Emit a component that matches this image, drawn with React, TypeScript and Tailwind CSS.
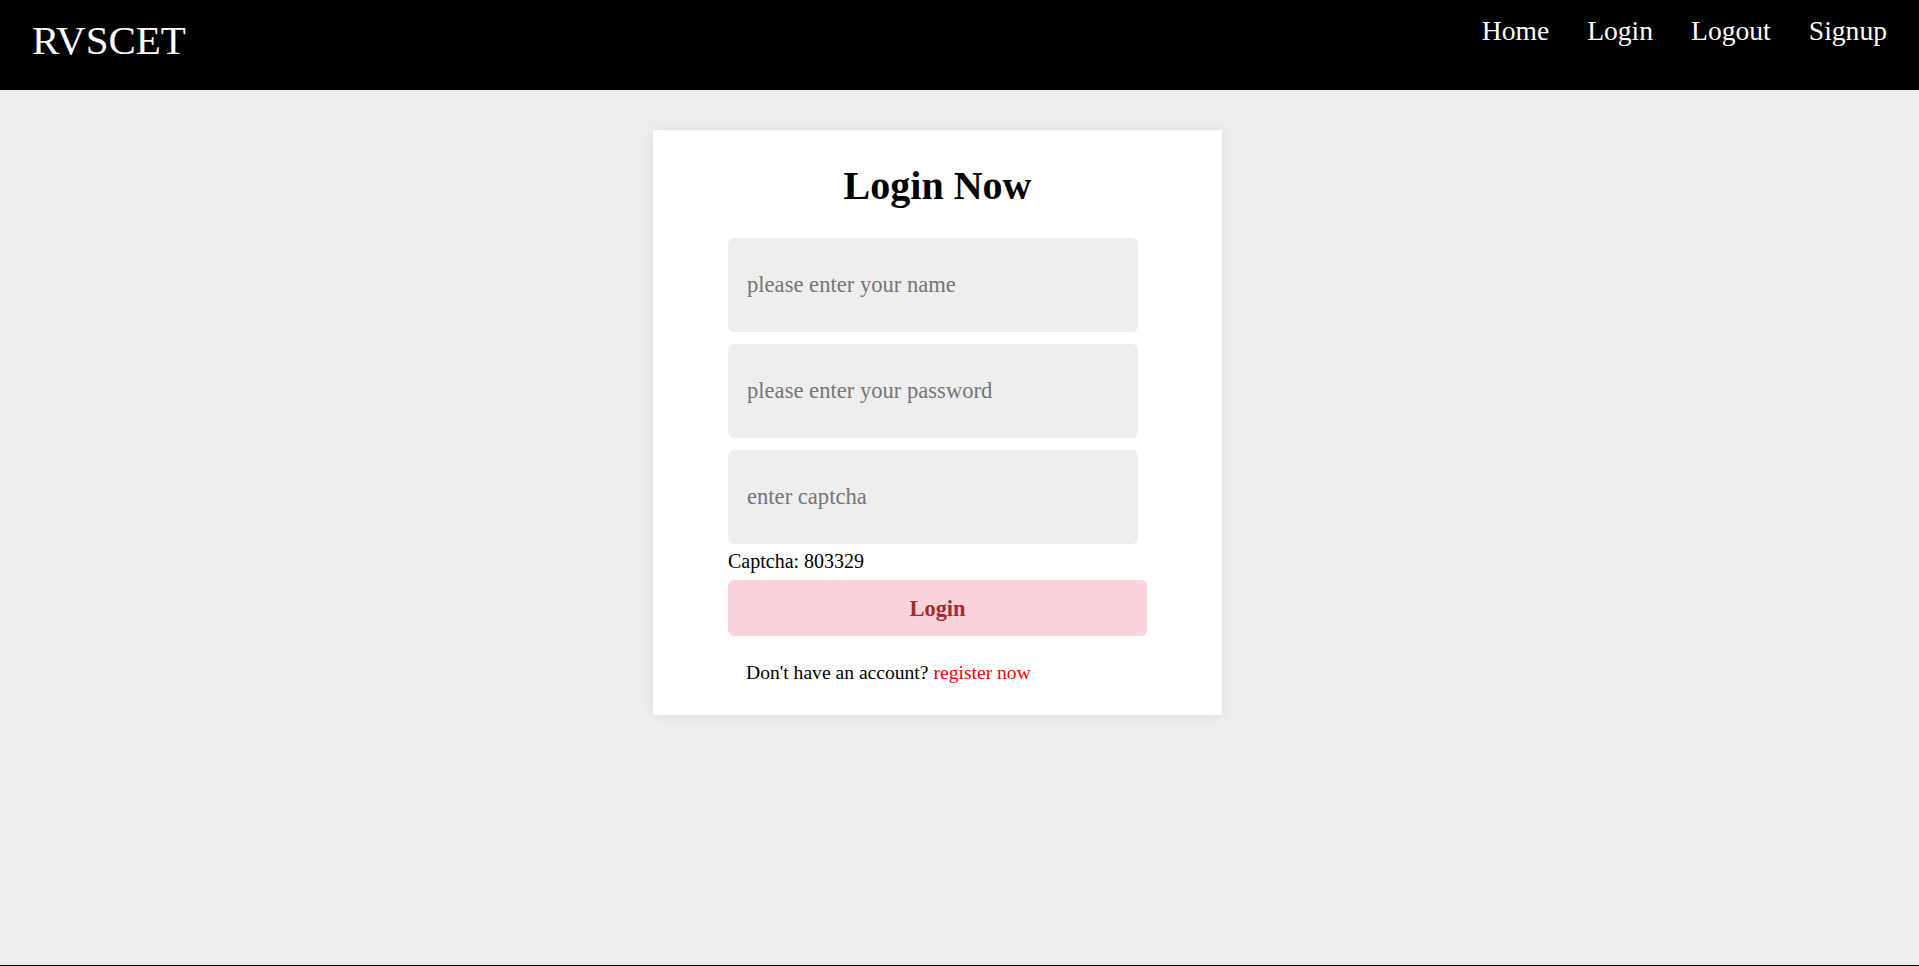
import React from "react";

export default function App() {
  return (
    <div className="min-h-screen flex flex-col bg-[#eeeeee] border-b border-black font-['Liberation_Serif',serif]">
      <header className="h-[90px] bg-black flex justify-between items-start px-[32px]">
        <div className="pt-[20px] text-[41px] leading-none text-white">RVSCET</div>
        <nav className="pt-[17px] flex gap-[38px] text-[27.6px] leading-none text-white">
          <a href="#">Home</a>
          <a href="#">Login</a>
          <a href="#">Logout</a>
          <a href="#">Signup</a>
        </nav>
      </header>
      <main className="flex-1 flex justify-center items-start pt-[40px] pr-[44px]">
        <div className="w-[569px] bg-white shadow-[0_0_12px_rgba(0,0,0,0.08)] pt-[36px] pb-[32px] px-[75px] flex flex-col">
          <h1 className="text-[40px] leading-none font-bold text-black text-center">Login Now</h1>
          <form className="mt-[32px] flex flex-col" onSubmit={(e) => e.preventDefault()}>
            <input
              type="text"
              placeholder="please enter your name"
              className="w-[410px] h-[94px] rounded-[6px] bg-[#eeeeee] px-[19px] text-[22.6px] text-black outline-none placeholder:text-[#757575]"
            />
            <input
              type="password"
              placeholder="please enter your password"
              className="mt-[12px] w-[410px] h-[94px] rounded-[6px] bg-[#eeeeee] px-[19px] text-[22.6px] text-black outline-none placeholder:text-[#757575]"
            />
            <input
              type="text"
              placeholder="enter captcha"
              className="mt-[12px] w-[410px] h-[94px] rounded-[6px] bg-[#eeeeee] px-[19px] text-[22.6px] text-black outline-none placeholder:text-[#757575]"
            />
            <div className="mt-[7px] text-[20px] leading-none text-black">Captcha: 803329</div>
            <button
              type="submit"
              className="mt-[9px] w-[419px] h-[56px] rounded-[6px] bg-[#fad2da] text-[#a52a2a] font-bold text-[22.4px] leading-none pt-[2px]"
            >
              Login
            </button>
            <p className="mt-[27px] pl-[18px] text-[19.6px] leading-none text-black">
              Don't have an account? <a href="#" className="text-[#ff0000]">register now</a>
            </p>
          </form>
        </div>
      </main>
    </div>
  );
}
